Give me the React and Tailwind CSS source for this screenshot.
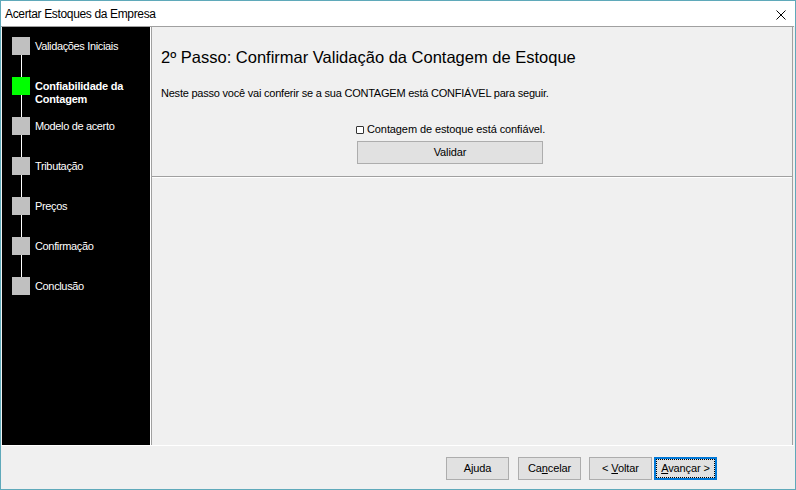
import React from "react";

const steps = [
  { label: "Validações Iniciais" },
  { label: "Confiabilidade da Contagem", active: true },
  { label: "Modelo de acerto" },
  { label: "Tributação" },
  { label: "Preços" },
  { label: "Confirmação" },
  { label: "Conclusão" },
];

function Btn({ children, className = "", focused = false }) {
  return (
    <div
      className={
        "h-[23px] flex items-center justify-center bg-[#e1e1e1] text-[11px] text-black tracking-[-0.1px] " +
        (focused ? "border-2 border-[#0078d7] " : "border border-[#adadad] ") +
        className
      }
    >
      {focused ? (
        <div className="w-full h-full border border-dotted border-black flex items-center justify-center">
          {children}
        </div>
      ) : (
        children
      )}
    </div>
  );
}

export default function App() {
  return (
    <div
      className="w-[796px] h-[490px] border border-[#5fa9ba] bg-[#f0f0f0] flex flex-col overflow-hidden"
      style={{ fontFamily: '"Liberation Sans", Arial, sans-serif' }}
    >
      {/* title bar */}
      <div className="h-[25px] bg-white flex items-center justify-between pl-[4px] pr-[9px] shrink-0">
        <span className="text-[12px] text-black tracking-[-0.35px]">Acertar Estoques da Empresa</span>
        <svg width="10" height="10" viewBox="0 0 10 10" className="mt-[2px]">
          <path d="M0.5 0.5 L9.5 9.5 M9.5 0.5 L0.5 9.5" stroke="#000" strokeWidth="1" fill="none" />
        </svg>
      </div>
      <div className="h-[1px] bg-[#a0a0a0] mr-[1px] shrink-0" />

      {/* middle */}
      <div className="h-[418px] flex shrink-0 pl-[1px] pr-[1px]">
        {/* sidebar */}
        <div className="relative w-[148px] bg-black pt-[10px] pl-[10px]">
          <div className="absolute left-[19px] top-[28px] w-[1px] h-[222px] bg-white" />
          {steps.map((s, i) => (
            <div key={i} className="relative h-[40px] flex items-start">
              <div
                className={
                  "w-[18px] h-[18px] shrink-0 " + (s.active ? "bg-[#00ff00]" : "bg-[#c0c0c0]")
                }
              />
              <div
                className={
                  "ml-[5px] mt-[3px] text-[11px] leading-[13px] text-white w-[100px] " +
                  (s.active ? "font-bold tracking-[-0.2px]" : "tracking-[-0.35px]")
                }
              >
                {s.label}
              </div>
            </div>
          ))}
        </div>
        <div className="w-[1px] bg-white" />
        <div className="w-[1px] bg-[#a0a0a0]" />

        {/* content */}
        <div className="flex-1 flex flex-col">
          <div className="h-[150px] pl-[9px] border-b border-[#a0a0a0] flex flex-col">
            <div className="mt-[20px] text-[16.5px] leading-[20px] text-black">
              2º Passo: Confirmar Validação da Contagem de Estoque
            </div>
            <div className="mt-[20px] text-[11px] leading-[13px] text-black tracking-[-0.22px]">
              Neste passo você vai conferir se a sua CONTAGEM está CONFIÁVEL para seguir.
            </div>
            <div className="mt-[23px] ml-[195px] flex items-center text-[11px] leading-[13px] text-black tracking-[-0.1px]">
              <div className="w-[8px] h-[8px] border border-[#333] rounded-[1px] bg-white mr-[3px]" />
              <span>Contagem de estoque está confiável.</span>
            </div>
            <Btn className="mt-[5px] ml-[196px] w-[186px]">Validar</Btn>
          </div>
          <div className="h-[1px] bg-white" />
          <div className="flex-1" />
        </div>
        <div className="w-[1px] bg-[#a0a0a0]" />
        <div className="w-[1px] bg-[#f0f0f0]" />
      </div>

      {/* footer */}
      <div className="h-[1px] bg-white shrink-0 mr-[1px]" />
      <div className="flex-1 flex justify-end items-start pt-[11px] pr-[78px]">
        <Btn className="w-[63px]">
          <span>
            A<span className="underline">j</span>uda
          </span>
        </Btn>
        <Btn className="w-[63px] ml-[9px]">
          <span>
            Ca<span className="underline">n</span>celar
          </span>
        </Btn>
        <Btn className="w-[63px] ml-[8px]">
          <span>
            &lt; <span className="underline">V</span>oltar
          </span>
        </Btn>
        <Btn className="w-[63px] ml-[2px]" focused>
          <span>
            <span className="underline">A</span>vançar &gt;
          </span>
        </Btn>
      </div>
    </div>
  );
}
